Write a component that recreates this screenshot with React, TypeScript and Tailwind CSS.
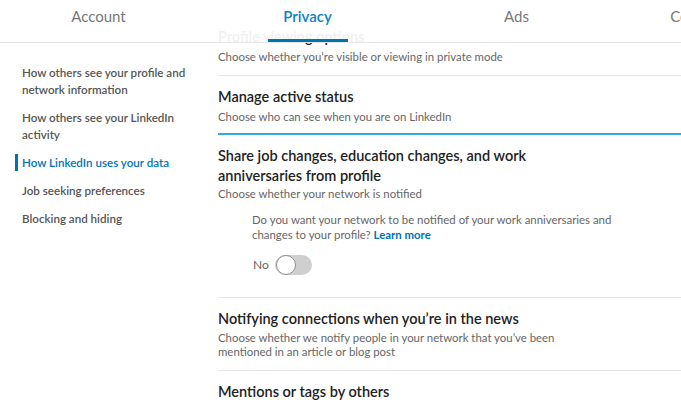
import React from "react";

const SIDE = [
  { label: "How others see your profile and network information" },
  { label: "How others see your LinkedIn activity" },
  { label: "How LinkedIn uses your data", active: true },
  { label: "Job seeking preferences" },
  { label: "Blocking and hiding" },
];

const TABS = ["Account", "Privacy", "Ads", "Communications"];

function Toggle() {
  return (
    <div className="w-[37px] h-[20px] rounded-full bg-[#cfcfcf] relative">
      <div className="absolute left-[1px] top-[0px] w-[20px] h-[20px] rounded-full bg-white border border-[#8f8f8f]" />
    </div>
  );
}

export default function App() {
  return (
    <div
      className="relative w-[681px] h-[400px] overflow-hidden bg-white"
      style={{ fontFamily: "Lato, 'Open Sans', sans-serif" }}
    >
      <div className="flex">
        {/* left nav */}
        <div className="w-[218px] shrink-0 pt-[64px] flex flex-col gap-[11px]">
          {SIDE.map((s) =>
            s.active ? (
              <div key={s.label} className="ml-[15px] border-l-[3px] border-[#0073b1] pl-[4px] text-[11.6px] leading-[17px] font-semibold text-[#0073b1] w-[190px]">
                {s.label}
              </div>
            ) : (
              <div key={s.label} className="pl-[22px] text-[11.6px] leading-[17px] font-semibold text-[#555] w-[208px]">
                {s.label}
              </div>
            )
          )}
        </div>

        {/* settings list */}
        <div className="flex-1 min-w-0 pt-[27px]">
          <div className="pb-[10px] border-b border-[#e6e6e6]">
            <div className="text-[14.5px] leading-[20px] font-semibold text-[#222]">Profile viewing options</div>
            <div className="mt-[2px] text-[11.4px] leading-[16px] text-[#666]">
              Choose whether you’re visible or viewing in private mode
            </div>
          </div>

          <div className="pt-[11px] pb-[8px] border-b-2 border-[#3ba3dc]">
            <div className="text-[14.5px] leading-[20px] font-semibold text-[#222]">Manage active status</div>
            <div className="mt-[2px] text-[11.4px] leading-[16px] text-[#666]">
              Choose who can see when you are on LinkedIn
            </div>
          </div>

          <div className="pt-[11px] pb-[22px] border-b border-[#e6e6e6]">
            <div className="w-[330px] text-[14.5px] leading-[20px] font-semibold text-[#222]">
              Share job changes, education changes, and work anniversaries from profile
            </div>
            <div className="text-[11.4px] leading-[16px] text-[#666]">Choose whether your network is notified</div>
            <div className="ml-[34px] mt-[10px] whitespace-nowrap text-[11.4px] leading-[15px] text-[#666]">
              Do you want your network to be notified of your work anniversaries and
              <br />
              changes to your profile? <span className="font-bold text-[#0073b1]">Learn more</span>
            </div>
            <div className="ml-[35px] mt-[13px] flex items-center gap-[6px]">
              <span className="text-[12px] text-[#666]">No</span>
              <Toggle />
            </div>
          </div>

          <div className="pt-[11px] pb-[11px] border-b border-[#e6e6e6]">
            <div className="text-[14.5px] leading-[20px] font-semibold text-[#222]">
              Notifying connections when you’re in the news
            </div>
            <div className="mt-[2px] w-[345px] text-[11.4px] leading-[14px] text-[#666]">
              Choose whether we notify people in your network that you’ve been mentioned in an article or blog post
            </div>
          </div>

          <div className="pt-[11px]">
            <div className="text-[14.5px] leading-[20px] font-semibold text-[#222]">Mentions or tags by others</div>
          </div>
        </div>
      </div>

      {/* translucent tab header */}
      <div className="absolute top-0 left-0 right-0 h-[43px] bg-white/[0.93] border-b border-[#e6e6e6] overflow-hidden">
        <div className="flex h-full ml-[-6px]">
          {TABS.map((t) => (
            <div key={t} className="w-[209px] shrink-0 flex flex-col items-center justify-between">
              <span
                className={
                  t === "Privacy"
                    ? "pt-[6px] text-[15px] leading-[20px] font-semibold text-[#0a82c4]"
                    : "pt-[6px] text-[15px] leading-[20px] text-[#777]"
                }
              >
                {t}
              </span>
              {t === "Privacy" ? <div className="w-[80px] h-[3px] bg-[#0073b1]" /> : <div />}
            </div>
          ))}
        </div>
      </div>
    </div>
  );
}
